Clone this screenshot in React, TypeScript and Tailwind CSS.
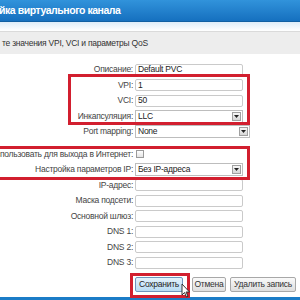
import type { ReactNode } from "react";

function Arrow() {
  return (
    <span className="flex h-[9px] w-[9px] items-center justify-center border border-[#a0a0a0] bg-gradient-to-b from-[#f7f7f7] to-[#d6d6d6] mr-[1px]">
      <svg width="5" height="3" viewBox="0 0 5 3">
        <path d="M0 0 L5 0 L2.5 3 Z" fill="#222" />
      </svg>
    </span>
  );
}

function TextBox({ value = "", wide = false }: { value?: string; wide?: boolean }) {
  return (
    <div
      className={`flex h-[12px] items-center rounded-[2px] border border-[#cacaca] bg-white px-[2px] text-[#222] ${
        wide ? "w-[115px]" : "w-[108px]"
      }`}
    >
      {value}
    </div>
  );
}

function Select({ value, wide = false }: { value: string; wide?: boolean }) {
  return (
    <div
      className={`flex h-[13px] items-center justify-between border border-[#bdbdbd] bg-white pl-[2px] text-[#222] ${
        wide ? "w-[115px]" : "w-[108px]"
      }`}
    >
      <span>{value}</span>
      <Arrow />
    </div>
  );
}

function Row({ label, children }: { label: string; children: ReactNode }) {
  return (
    <div className="flex h-[15.5px] items-center">
      <div className="flex w-[133px] shrink-0 justify-end">
        <span className="shrink-0 whitespace-nowrap text-[#444]">{label}</span>
      </div>
      <div className="ml-[2px]">{children}</div>
    </div>
  );
}

export default function App() {
  return (
    <div
      className="relative h-[300px] w-[300px] overflow-hidden bg-white text-[8.5px] tracking-[-0.25px]"
      style={{ fontFamily: '"Liberation Sans", Arial, sans-serif' }}
    >
      <div className="flex h-[22px] items-center border-b border-[#0f5fa3] bg-gradient-to-b from-[#3193db] to-[#1570bf]">
        <span className="-ml-[1px] whitespace-nowrap text-[10.5px] font-bold tracking-[-0.45px] text-white">
          йка виртуального канала
        </span>
      </div>
      <div className="h-[9px] bg-gradient-to-b from-[#dcecf9] to-white" />
      <div className="flex h-[23px] items-center border-t border-[#dadada] bg-[#ededed] pl-[2px] text-[#333]">
        те значения VPI, VCI и параметры QoS
      </div>

      <div className="mt-[8px] flex flex-col">
        <Row label="Описание:">
          <TextBox value="Default PVC" />
        </Row>
        <Row label="VPI:">
          <TextBox value="1" />
        </Row>
        <Row label="VCI:">
          <TextBox value="50" />
        </Row>
        <Row label="Инкапсуляция:">
          <Select value="LLC" />
        </Row>
        <Row label="Port mapping:">
          <Select value="None" wide />
        </Row>

        <div className="mt-[7px]" />
        <Row label="Использовать для выхода в Интернет:">
          <div className="ml-[1px] h-[8px] w-[8px] border border-[#9a9a9a] bg-gradient-to-b from-white to-[#e4e4e4]" />
        </Row>
        <Row label="Настройка параметров IP:">
          <Select value="Без IP-адреса" />
        </Row>
        <Row label="IP-адрес:">
          <TextBox />
        </Row>
        <Row label="Маска подсети:">
          <TextBox />
        </Row>
        <Row label="Основной шлюз:">
          <TextBox />
        </Row>
        <Row label="DNS 1:">
          <TextBox />
        </Row>
        <Row label="DNS 2:">
          <TextBox />
        </Row>
        <Row label="DNS 3:">
          <TextBox />
        </Row>

        <div className="mt-[6px] flex items-center pl-[135px]">
          <button className="h-[15px] w-[48px] rounded-[2px] border border-[#6f95bd] bg-gradient-to-b from-[#e4f2fc] to-[#b9dcf4] text-[#222]">
            Сохранить
          </button>
          <button className="ml-[9px] h-[15px] w-[34px] rounded-[2px] border border-[#a8a8a8] bg-gradient-to-b from-[#fafafa] to-[#dedede] text-[#333]">
            Отмена
          </button>
          <button className="ml-[4px] h-[15px] w-[66px] rounded-[2px] border border-[#a8a8a8] bg-gradient-to-b from-[#fafafa] to-[#dedede] text-[#333]">
            Удалить запись
          </button>
        </div>
      </div>

      <div className="absolute bottom-0 left-0 h-[3px] w-full bg-[#1b7cc7]" />

      {/* red annotation frames */}
      <div className="absolute left-[68px] top-[74px] h-[51px] w-[182px] border-[3px] border-[#d21f2f]" />
      <div className="absolute -left-[3px] top-[146px] h-[34px] w-[253px] border-[3px] border-[#d21f2f]" />
      <div className="absolute left-[130px] top-[273px] h-[25px] w-[60px] border-[3px] border-[#d21f2f]" />

      <svg className="absolute left-[181px] top-[283px]" width="10" height="15" viewBox="0 0 10 15">
        <path d="M1 1 L1 12 L3.5 9.5 L5.5 14 L7 13.3 L5 9 L8.5 9 Z" fill="#fff" stroke="#222" strokeWidth="0.9" strokeLinejoin="round" />
      </svg>
    </div>
  );
}
